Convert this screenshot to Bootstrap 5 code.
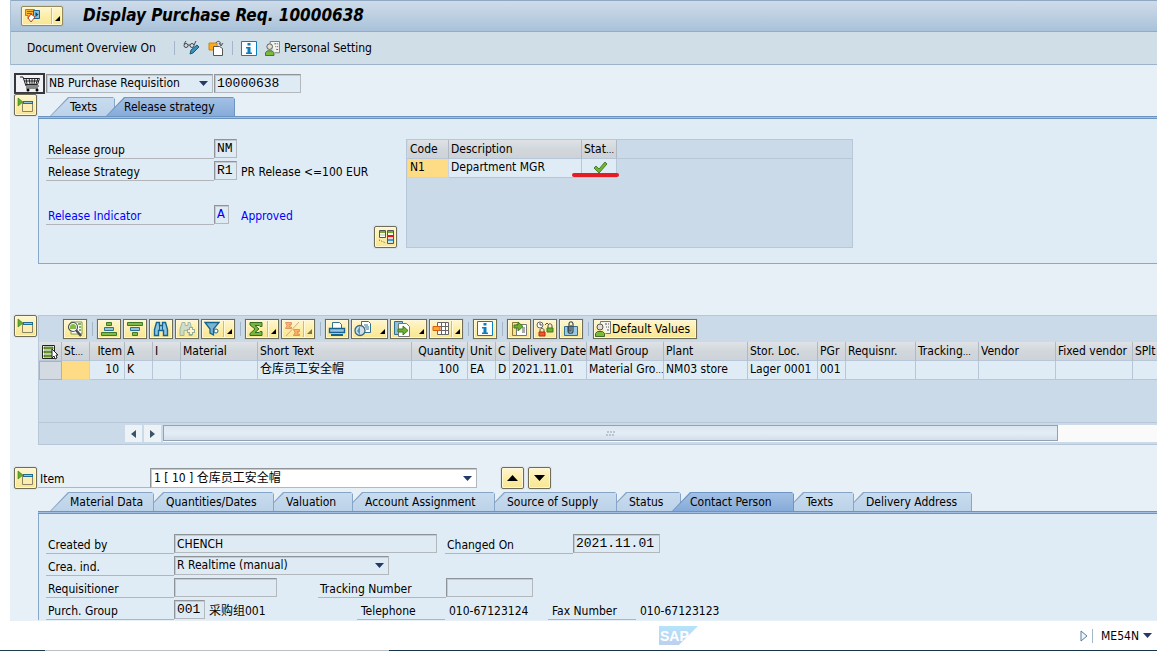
<!DOCTYPE html>
<html lang="en">
<head>
<meta charset="utf-8">
<meta name="viewport" content="width=device-width, initial-scale=1">
<title>Display Purchase Req. 10000638</title>
<link href="https://cdn.jsdelivr.net/npm/bootstrap@5.3.0/dist/css/bootstrap.min.css" rel="stylesheet">
<style>
:root { --ui: "DejaVu Sans Condensed", "Noto Sans CJK SC", sans-serif; --fixed: "Liberation Mono", "Noto Sans CJK SC", monospace; }
body { font: 12px/18px var(--ui); color: #000; background: #fff; }
button, input, select { font: inherit; color: inherit; }
svg { display: block; flex: none; }
.shell { min-height: 100vh; }
.work { margin-left: 10px; background: #e8f0f7; overflow: hidden; }
.frame-l { border-left: 1px solid #a9bed3; }
.titlebar { height: 32px; padding: 0 10px; border-top: 1px solid #8fa9c4; border-bottom: 1px solid #93abc5; background: linear-gradient(#cfdce9, #bccfe1 50%, #a9c2da); }
.titlebar h1 { font: italic bold 17px/26px var(--ui); margin: 0 0 3px 20px; }
.appbar { height: 33px; padding-left: 16px; background: #d0dee8; border-bottom: 1px solid #9cb3cb; }
.appbar .after-text { margin-left: 18px; }
.plain-btn { background: none; border: 0; padding: 0; display: flex; align-items: center; }
.vline { width: 1px; height: 14px; background: #a3b5c9; flex: none; }
.ybtn { display: flex; align-items: center; justify-content: center; padding: 0; border: 1px solid #6f6c58; border-radius: 2px; background: linear-gradient(#fdf6d4, #fdeea8 50%, #f8e694); box-shadow: inset 0 0 0 1px #fff8d8, 0 0 0 1px #9a978022; flex: none; }
.ybtn-lg { width: 23px; height: 22px; }
.ybtn-title { width: 42px; height: 20px; border-color: #948a5a; --cut: 29px; }
.tool { width: 24px; height: 20px; border-radius: 0; }
.tool-split { width: 34px; --cut: 21px; }
.tool-menu { width: 37px; }
.tool-split, .tool-menu, .ybtn-title { justify-content: space-between; padding: 0 2px; }
.tool-split, .ybtn-title { background: linear-gradient(90deg, transparent var(--cut), #cdbd78 0 calc(var(--cut) + 1px), #fffbe2 0 calc(var(--cut) + 2px), transparent 0), linear-gradient(#fdf6d4, #fdeea8 50%, #f8e694); }
.tool-text { width: 104px; justify-content: flex-start; padding-left: 1px; gap: 1px; white-space: nowrap; }
.off > svg:first-child { opacity: .5; }
.rail { width: 28px; padding-left: 4px; flex: none; }
.dots { font-size: 9px; line-height: 0; }
.fld { height: 19px; padding: 0 2px; border: 1px solid #b3b8bd; border-top-color: #8f9499; border-left-color: #8f9499; box-shadow: inset 1px 1px 0 #c5cbd0; border-radius: 0; background-color: #dfebf4; line-height: 15px; outline: 0; flex: none; }
.fld-fixed { font: 13px/16px var(--fixed); }
.drop { appearance: none; background: #dfebf4 url("data:image/svg+xml,%3Csvg xmlns='http://www.w3.org/2000/svg' width='9' height='5'%3E%3Cpath d='M0 0h9L4.500 5z' fill='%23243a66'/%3E%3C/svg%3E") no-repeat right 4px center; }
.drop-open { background-color: #fff; height: 20px; padding-left: 3px; }
.lbl { height: 20px; line-height: 22px; padding-left: 2px; border-bottom: 1px solid #b2b6ba; flex: none; white-space: nowrap; }
.frow { display: flex; height: 20px; margin-bottom: 2px; white-space: nowrap; }
.frow > span { line-height: 22px; }
.w-rel { width: 168px; } .w-std { width: 128px; } .w-tel { width: 88px; }
.w-f1 { width: 15px; } .w-f2 { width: 23px; } .w-f3 { width: 31px; } .w-f10 { width: 87px; } .w-f12 { width: 103px; } .w-f30 { width: 263px; } .w-sel { width: 215px; } .w-type { width: 167px; } .w-item { width: 327px; } .w-itemlbl { width: 112px; }
.relform { width: 328px; }
.docline { padding: 8px 0 0 4px; gap: 1px; }
.tabbox { padding-top: 3px; min-width: 0; }
.items { padding-top: 51px; }
.itemline { padding-top: 22px; }
.far { margin-left: 41px; }
.blue { color: #00f; }
.tabs { height: 19px; padding-left: 12px; }
.tab-i { position: relative; z-index: 0; border: 0; padding: 0 0 0 21px; height: 19px; margin-left: -9px; text-align: left; white-space: nowrap; line-height: 20px; background: #87a5c6; clip-path: polygon(18px 0, calc(100% - 2px) 0, 100% 2px, 100% 100%, 0 100%); flex: none; }
.tab-i::before { content: ""; position: absolute; inset: 1px 1px 0 1px; z-index: -1; background: linear-gradient(#c8dcef, #bcd2e8); clip-path: polygon(18px 0, 100% 0, 100% 100%, 0 100%); }
.tab-i:first-child { margin-left: 0; padding-left: 20px; }
.tab-i.active { z-index: 20; padding-left: 18px; background: #6d96c5; }
.tab-i.active::before { background: linear-gradient(#a3c0e4, #86abd9); }
.t1 { width: 104px; z-index: 9; } .t2 { width: 129px; z-index: 8; } .t3 { width: 88px; z-index: 7; } .t4 { width: 151px; z-index: 6; } .t5 { width: 131px; z-index: 5; } .t6 { width: 73px; z-index: 4; } .t7 { width: 122px; } .t8 { width: 69px; z-index: 2; } .t9 { width: 127px; z-index: 1; }
.ta { width: 65px; z-index: 2; } .tb { width: 129px; }
.pane { border-left: 1px solid #88a9cc; background: #dfecf5; padding: 0 0 0 7px; }
.pane::before { content: ""; display: block; height: 3px; margin: 0 0 20px -8px; background: #a2bfe2; border: solid #6c94c0; border-width: 1px 0 1px 0; }
.pane-rel { height: 148px; border-bottom: 1px solid #88a9cc; }
.pane-items { border: 1px solid #b8c7d7; border-right: 0; background: #cbdae9; overflow: hidden; }
.gridbox { width: 447px; height: 109px; margin-left: 9px; padding: 0 0 0 1px; border: 1px solid #b8c7d7; background: linear-gradient(transparent 18px, #b8c7d7 18px 19px, transparent 19px) #cbdae9; }
.tbl { table-layout: fixed; border-collapse: separate; border-spacing: 0; line-height: 17px; }
.tbl th { height: 19px; padding: 1px 0 0 2px; font-weight: normal; overflow: hidden; white-space: nowrap; background: linear-gradient(#dfe3e7, #d2d7dc 50%, #cdd3d9); border-right: 1px solid #b0b8c2; border-bottom: 1px solid #b8c7d7; }
.tbl td { height: 19px; padding: 0 0 1px 2px; overflow: hidden; white-space: nowrap; background: #dfecf5; border-right: 1px solid #b8c7d7; border-bottom: 1px solid #b8c7d7; }
.tbl td.key { background: #fddc85; border-color: #c8d6e4; }
.tbl .num { text-align: right; padding-right: 5px; }
.tbl td.qty { padding-right: 8px; }
.tbl th.num { padding-right: 2px; }
.tbl td.handle { background: #d3dae2; border: 1px solid #a9b2bd; }
.tbl-rel { width: 209px; }
.tbl-items { width: 1121px; }
.under { position: relative; overflow: visible !important; }
.under::after { content: ""; position: absolute; left: -10px; right: -3px; bottom: 0; height: 4px; border-radius: 2px; background: #e51c23; }
.itembar { height: 26px; padding: 0 0 1px 24px; gap: 2px; }
.itembar .vline { margin: 0 2px 0 3px; }
.scroller { height: 22px; margin-top: 42px; border-top: 1px solid #b8c7d7; padding: 2px 0 2px 86px; gap: 1px; }
.sbtn { width: 17px; height: 17px; border: 0; padding: 0; background: #edf2f7; display: flex; align-items: center; justify-content: center; margin-right: 1px; flex: none; }
.track { height: 17px; background: #fafafa; }
.thumb { width: 90%; height: 16px; border: 1px solid #94a1b0; background: linear-gradient(#dbe6ef, #e3edf5 50%, #d2e0eb); display: flex; align-items: center; justify-content: center; }
.statusbar { height: 29px; position: relative; padding-right: 5px; }
.saplogo { position: absolute; left: 57%; top: 5px; }
.edge { height: 1px; background: linear-gradient(90deg, #1d3d4d 45px, #b9bfc3 45px, #b9bfc3 389px, #17344a 389px); }
.cart { width: 31px; height: 21px; border: 2px solid #38383c; background: #f0f2f5; }
</style>
</head>
<body>
<svg width="0" height="0" class="position-absolute" aria-hidden="true">
  <symbol id="expand" viewBox="0 0 17 16"><path d="M5.500 5.500h10v9h-10z" fill="#fdeeb0" stroke="#8c8467"/><path d="M6 4h10v3H6z" fill="#1f6f95"/><path d="M7 5.500h8" stroke="#8fc6e0"/><path d="M1 1l5 4-5 4z" fill="#5fae2b" stroke="#3f7a1d" stroke-width=".6"/></symbol>
  <symbol id="info" viewBox="0 0 16 15"><path d="M.5.500h15v14H.500z" fill="#fff" stroke="#0b7fbf"/><path d="M6.500 2h3v2.500h-3zM5 6h4.500v5.500H11V13H5v-1.500h1.500v-4H5z" fill="#0b7fbf"/></symbol>
  <symbol id="person" viewBox="0 0 16 16"><path d="M5.500.500h10v12h-5M5.500.500v2" fill="#f3f3f0" stroke="#777"/><path d="M10 3h2m1 0h1m-3 3h1m1 0h1m-2 3h2" stroke="#555"/><circle cx="5" cy="6" r="3" fill="#e6ded2" stroke="#555"/><path d="M.5 15.500v-3l2-2h5l2 2v3z" fill="#7ab93a" stroke="#426b25"/></symbol>
  <symbol id="corner" viewBox="0 0 5 5"><path d="M5 0v5H0z" fill="#000"/></symbol>
</svg>
<div class="shell d-flex flex-column">
<main class="work flex-grow-1">
  <header class="frame-l">
    <div class="titlebar d-flex align-items-center">
      <button class="ybtn ybtn-title" aria-label="Services for object">
        <svg width="20" height="16" viewBox="0 0 20 16"><path d="M1.500 1.500h9v6H6l-2 3v-3H1.500z" fill="#fbb52c" stroke="#dd6a1b"/><path d="M3 3.500h6M3 5.500h5" stroke="#c9500c"/><path d="M9.500 2.500h6v8h-6z" fill="#86c1df" stroke="#1c6791"/><path d="M11.500 4l3 2.500-3 2.500z" fill="#124b70"/><path d="M7 6l4 3-4 5-3-4z" fill="#fff" stroke="#b8452a"/></svg>
        <svg class="align-self-end mb-1" width="5" height="5"><use href="#corner"/></svg>
      </button>
      <h1>Display Purchase Req. 10000638</h1>
    </div>
    <div class="appbar d-flex align-items-center">
      <button class="plain-btn">Document Overview On</button>
      <span class="vline after-text me-2"></span>
      <button class="plain-btn" aria-label="Display / Change"><svg width="17" height="16" viewBox="0 0 17 16"><g fill="none" stroke="#44494d"><circle cx="3" cy="5.500" r="2"/><circle cx="9" cy="5.500" r="2"/><path d="M1 4l2-3M7 5h-2M11 5l2-4"/></g><path d="M7 14l1-4 6-5 2 2-6 6z" fill="#3990bd" stroke="#1c5878"/></svg></button>
      <button class="plain-btn ms-2" aria-label="Other document"><svg width="16" height="16" viewBox="0 0 16 16"><path d="M1 3h8v7H1z" fill="#fbaa19" stroke="#d7820c"/><path d="M5.500 6.500h6l3 2v7h-9z" fill="#fff" stroke="#555"/><path d="M8 3c1-3 5-2 5 2M11 3l2 3 2-3" fill="none" stroke="#555"/></svg></button>
      <span class="vline ms-2 me-2"></span>
      <button class="plain-btn" aria-label="Information"><svg width="16" height="15"><use href="#info"/></svg></button>
      <button class="plain-btn ms-2"><svg class="me-1" width="15" height="15"><use href="#person"/></svg>Personal Setting</button>
    </div>
  </header>

  <section>
    <div class="d-flex docline align-items-center">
      <svg class="cart" viewBox="0 0 27 17"><path d="M4 2h3l3 9h13M7 3.500h16.500l-2 6H9M10 3l1 6M13 3l1 6M16 3v6M19 3l-1 6M22 3l-2 6M8 6h15M10 13h12" fill="none" stroke="#222"/><circle cx="12" cy="15" r="1.500"/><circle cx="21" cy="15" r="1.500"/></svg>
      <select class="fld drop w-type" aria-label="Document type"><option>NB Purchase Requisition</option></select>
      <input class="fld fld-fixed w-f10" value="10000638" readonly aria-label="Document number">
    </div>
    <div class="d-flex">
      <div class="rail"><button class="ybtn ybtn-lg" aria-label="Expand header"><svg width="17" height="16"><use href="#expand"/></svg></button></div>
      <div class="flex-grow-1 tabbox">
        <nav class="tabs d-flex"><button class="tab-i ta">Texts</button><button class="tab-i tb active">Release strategy</button></nav>
        <div class="pane pane-rel">
          <div class="d-flex">
            <div class="relform">
              <div class="frow"><label class="lbl w-rel" for="rg">Release group</label><input id="rg" class="fld fld-fixed w-f2" value="NM" readonly></div>
              <div class="frow"><label class="lbl w-rel" for="rs">Release Strategy</label><input id="rs" class="fld fld-fixed w-f2" value="R1" readonly><span class="ms-1">PR Release &lt;=100 EUR</span></div>
              <div class="frow"></div>
              <div class="frow blue"><label class="lbl w-rel" for="ri">Release Indicator</label><input id="ri" class="fld fld-fixed w-f1" value="A" readonly><span class="ms-2 ps-1">Approved</span></div>
            </div>
            <button class="ybtn ybtn-lg align-self-end" aria-label="Release options"><svg width="16" height="16" viewBox="0 0 16 16"><path d="M1.500 1.500h6v7h-6zM9.500 1.500h6v13h-6z" fill="#fff" stroke="#555"/><path d="M2 2h5v2H2zM10 2h5v2h-5z" fill="#6fae35"/><path d="M2 6h5M10 9h5M10 13h5" stroke="#bbb"/><path d="M10 6h5v2h-5z" fill="#e11"/><path d="M10 10h5v2h-5z" fill="#439bd0"/><path d="M1 11l7 3" stroke="#555" stroke-dasharray="1 1.500"/></svg></button>
            <div class="gridbox">
              <table class="tbl tbl-rel">
                <colgroup><col style="width:41px"><col style="width:133px"><col style="width:35px"></colgroup>
                <tr><th>Code</th><th>Description</th><th>Stat<span class="dots">…</span></th></tr>
                <tr><td class="key">N1</td><td>Department MGR</td><td class="under"><svg class="mx-auto" width="16" height="13" viewBox="0 0 16 13"><path d="M2 7l2-2 3 3 6-7 2 2-8 9z" fill="#72b32f" stroke="#47802a"/></svg></td></tr>
              </table>
            </div>
          </div>
        </div>
      </div>
    </div>
  </section>

  <section class="d-flex items">
    <div class="rail"><button class="ybtn ybtn-lg" aria-label="Expand items"><svg width="17" height="16"><use href="#expand"/></svg></button></div>
    <div class="pane-items flex-grow-1">
      <div class="itembar d-flex align-items-center">
        <button class="ybtn tool" aria-label="Details"><svg width="16" height="16" viewBox="0 0 16 16"><path d="M4 1h11v12H4z" fill="#fff" stroke="#7a9a4a"/><path d="M11 3h3M12 6h2M12 9h2" stroke="#5d9a2c" stroke-width="1.500"/><circle cx="6" cy="6" r="4.500" fill="#fff" stroke="#4a4f52" stroke-width="1.200"/><path d="M3 6a3 3 0 0 1 6 0v2H3z" fill="#86bb45"/><path d="M9 9l5 6" stroke="#4a4f52" stroke-width="2.500"/></svg></button>
        <span class="vline"></span>
        <button class="ybtn tool" aria-label="Sort ascending"><svg width="18" height="16" viewBox="0 0 18 16"><path d="M6.500 1.500h5v3h-5zM1.500 11.500h15v3h-15z" fill="#7fbb45" stroke="#3f7a2c"/><path d="M4.500 6.500h9v3h-9z" fill="#8cc4de" stroke="#31708f"/></svg></button>
        <button class="ybtn tool" aria-label="Sort descending"><svg width="18" height="16" viewBox="0 0 18 16"><path d="M1.500 1.500h15v3h-15zM6.500 11.500h5v3h-5z" fill="#7fbb45" stroke="#3f7a2c"/><path d="M4.500 6.500h9v3h-9z" fill="#8cc4de" stroke="#31708f"/></svg></button>
        <button class="ybtn tool" aria-label="Find"><svg width="16" height="16" viewBox="0 0 16 16"><path d="M3.500 1.500H6.500v3h3v-3h3l2 7v6h-4v-5h-5v5h-4v-6z" fill="#8fc6e0" stroke="#176390" stroke-width="1.400"/><path d="M6.500 4v5M9.500 4v5" stroke="#176390"/></svg></button>
        <button class="ybtn tool off" aria-label="Find next"><svg width="16" height="16" viewBox="0 0 16 16"><path d="M3 1.500h3v3h3v-3h2l2 7v6h-3v-5H5v5H1v-6z" fill="#a5cbdd" stroke="#45829f"/><path d="M12 6v8M8 10h8" stroke="#31708f" stroke-width="4"/><path d="M12 7v6M9 10h6" stroke="#fff" stroke-width="2"/></svg></button>
        <button class="ybtn tool tool-split" aria-label="Filter"><svg width="16" height="16" viewBox="0 0 16 16"><path d="M1 1.500h14L9.500 8v6L6 12V8z" fill="#78b5d5" stroke="#176390" stroke-width="1.300"/><circle cx="12" cy="10" r="2" fill="#fff" stroke="#176390"/></svg><svg class="align-self-end mb-1" width="5" height="5"><use href="#corner"/></svg></button>
        <span class="vline"></span>
        <button class="ybtn tool tool-split" aria-label="Total"><svg width="16" height="16" viewBox="0 0 16 16"><path d="M2 1.500h12v4h-2l-1-1H7l4 3.500-4 3.500h4l1-1h2v4H2v-2L7 8 2 4z" fill="#76b53a" stroke="#376b27"/></svg><svg class="align-self-end mb-1" width="5" height="5"><use href="#corner"/></svg></button>
        <button class="ybtn tool tool-split off" aria-label="Subtotal"><svg width="17" height="16" viewBox="0 0 17 16"><path d="M1.500 1.500h6v2H5l1.500 1L5 6h2.500v1.500h-6L3 4.500zM9.500 8.500h6v2H13l1.500 1L13 13h2.500v1.500h-6l1.500-3z" fill="#f5762c" stroke="#c8410f"/><path d="M15 1L2 15" stroke="#a65"/></svg><svg class="align-self-end mb-1 opacity-50" width="5" height="5"><use href="#corner"/></svg></button>
        <span class="vline"></span>
        <button class="ybtn tool" aria-label="Print"><svg width="18" height="16" viewBox="0 0 18 16"><path d="M4.500 1.500h7l2 2v4h-9z" fill="#fff" stroke="#31708f"/><path d="M1.500 7.500h15v4h-15z" fill="#9ac5dd" stroke="#176390" stroke-width="1.400"/><path d="M3 14h12" stroke="#176390" stroke-width="2"/></svg></button>
        <button class="ybtn tool tool-menu" aria-label="Views"><svg width="18" height="16" viewBox="0 0 18 16"><path d="M7.500.500h7l2 2v9h-9z" fill="#fff" stroke="#31708f"/><path d="M10 4h4M11 6h4M12 8h3" stroke="#31708f"/><circle cx="6" cy="9.500" r="5" fill="#cfe1ea" stroke="#40657a" stroke-width="1.300"/><path d="M6 5v9l-3-4z" fill="#4a98c1"/></svg><svg class="align-self-end mb-1" width="5" height="5"><use href="#corner"/></svg></button>
        <button class="ybtn tool tool-menu" aria-label="Export"><svg width="18" height="16" viewBox="0 0 18 16"><path d="M1.500.500h8v13h-8z" fill="#8fc0da" stroke="#31708f"/><path d="M5.500 2.500h8l3 3v10h-11z" fill="#fff" stroke="#777"/><path d="M5 8h5V5l5 4.500-5 4.500v-3H5z" fill="#6fb02f" stroke="#3f7a1d"/></svg><svg class="align-self-end mb-1" width="5" height="5"><use href="#corner"/></svg></button>
        <button class="ybtn tool tool-split" aria-label="Layout"><svg width="18" height="16" viewBox="0 0 18 16"><path d="M5.500 1.500h11v12h-11zM5 5.500h12M5 9.500h12M9.500 1v13M13.500 1v13" fill="#fff" stroke="#666"/><path d="M1 5.500h7v4H1z" fill="#fbaa2c" stroke="#df5b13"/></svg><svg class="align-self-end mb-1" width="5" height="5"><use href="#corner"/></svg></button>
        <span class="vline"></span>
        <button class="ybtn tool" aria-label="Information"><svg width="16" height="15"><use href="#info"/></svg></button>
        <span class="vline"></span>
        <button class="ybtn tool" aria-label="Copy item"><svg width="17" height="16" viewBox="0 0 17 16"><path d="M1.500 1.500h6v13h-6z" fill="#fde08b" stroke="#8b7a35"/><path d="M5.500 3.500h10v11h-10z" fill="#fff" stroke="#777"/><path d="M11 7h3M11 9h3M11 11h3" stroke="#555"/><path d="M3 4h4V1l5 4.500L7 10V7H3z" fill="#6fb02f" stroke="#3f7a1d"/></svg></button>
        <button class="ybtn tool" aria-label="Lock"><svg width="18" height="16" viewBox="0 0 18 16"><circle cx="4" cy="4" r="3" fill="#fff" stroke="#666"/><path d="M4 2v2h2M9 4l2-2 2 2" fill="none" stroke="#555"/><path d="M12 7V5c0-3 4-3 4 0v2" fill="none" stroke="#555"/><path d="M11 7h6v4h-6z" fill="#6fb02f" stroke="#3f7a1d"/><path d="M4 11V9c0-2 4-2 4 0v2" fill="none" stroke="#555"/><path d="M3 11h6v4H3z" fill="#ee5a2a" stroke="#b52b14"/></svg></button>
        <button class="ybtn tool" aria-label="Attachments"><svg width="16" height="16" viewBox="0 0 16 16"><path d="M1.500 5.500h13v9h-13z" fill="#9cc9e2" stroke="#31708f"/><path d="M5 5v5c0 3 5 3 5 0V3c0-3-4-3-4 0v7h2V4" fill="none" stroke="#3b4a54" stroke-width="1.200"/></svg></button>
        <span class="vline"></span>
        <button class="ybtn tool tool-text"><svg width="16" height="16"><use href="#person"/></svg>Default Values</button>
      </div>
      <table class="tbl tbl-items">
        <colgroup><col style="width:23px"><col style="width:28px"><col style="width:35px"><col style="width:28px"><col style="width:28px"><col style="width:77px"><col style="width:154px"><col style="width:56px"><col style="width:28px"><col style="width:14px"><col style="width:77px"><col style="width:77px"><col style="width:84px"><col style="width:70px"><col style="width:28px"><col style="width:70px"><col style="width:63px"><col style="width:77px"><col style="width:77px"><col style="width:27px"></colgroup>
        <tr><th><svg width="18" height="16" viewBox="0 0 18 16"><path d="M1.500 1.500h12v13h-12z" fill="#fff" stroke="#222"/><path d="M3 3h9v2H3zM3 7h9v2H3zM3 11h9v2H3z" fill="#7bb02c" stroke="#356019" stroke-width=".7"/><path d="M11 5v9l2-2 1 3 2-1-1-3h2z" fill="#fff" stroke="#222"/></svg></th><th>St<span class="dots">…</span></th><th class="num">Item</th><th>A</th><th>I</th><th>Material</th><th>Short Text</th><th class="num">Quantity</th><th>Unit</th><th>C</th><th>Delivery Date</th><th>Matl Group</th><th>Plant</th><th>Stor. Loc.</th><th>PGr</th><th>Requisnr.</th><th>Tracking<span class="dots">…</span></th><th>Vendor</th><th>Fixed vendor</th><th>SPlt</th></tr>
        <tr><td class="handle"></td><td class="key"></td><td class="num">10</td><td>K</td><td></td><td></td><td>仓库员工安全帽</td><td class="num qty">100</td><td>EA</td><td>D</td><td>2021.11.01</td><td>Material Gro<span class="dots">…</span></td><td>NM03 store</td><td>Lager 0001</td><td>001</td><td></td><td></td><td></td><td></td><td></td></tr>
      </table>
      <div class="scroller d-flex">
        <button class="sbtn" aria-label="Scroll left"><svg width="5" height="8"><path d="M5 0v8L0 4z" fill="#3b5368"/></svg></button>
        <button class="sbtn" aria-label="Scroll right"><svg width="5" height="8"><path d="M0 0v8l5-4z" fill="#3b5368"/></svg></button>
        <div class="track flex-grow-1"><div class="thumb"><svg width="9" height="5"><path d="M1 1h2m1 0h2m1 0h2M0 4h2m1 0h2m1 0h2" stroke="#94a1b0"/></svg></div></div>
      </div>
    </div>
  </section>

  <section>
    <div class="d-flex align-items-center itemline">
      <div class="rail"><button class="ybtn ybtn-lg" aria-label="Expand item detail"><svg width="17" height="16"><use href="#expand"/></svg></button></div>
      <label class="lbl w-itemlbl" for="item">Item</label>
      <select id="item" class="fld drop drop-open w-item"><option>1 [ 10 ] 仓库员工安全帽</option></select>
      <button class="ybtn ybtn-lg ms-4" aria-label="Previous item"><svg width="11" height="6"><path d="M0 6h11L5.500 0z"/></svg></button>
      <button class="ybtn ybtn-lg ms-1" aria-label="Next item"><svg width="11" height="6"><path d="M0 0h11L5.500 6z"/></svg></button>
    </div>
    <div class="d-flex">
      <div class="rail"></div>
      <div class="flex-grow-1 tabbox">
        <nav class="tabs d-flex"><button class="tab-i t1">Material Data</button><button class="tab-i t2">Quantities/Dates</button><button class="tab-i t3">Valuation</button><button class="tab-i t4">Account Assignment</button><button class="tab-i t5">Source of Supply</button><button class="tab-i t6">Status</button><button class="tab-i t7 active">Contact Person</button><button class="tab-i t8">Texts</button><button class="tab-i t9">Delivery Address</button></nav>
        <div class="pane">
          <div class="frow"><label class="lbl w-std" for="cb">Created by</label><input id="cb" class="fld w-f30" value="CHENCH" readonly><label class="lbl w-std ms-2" for="co">Changed On</label><input id="co" class="fld fld-fixed w-f10" value="2021.11.01" readonly></div>
          <div class="frow"><label class="lbl w-std" for="ci">Crea. ind.</label><select id="ci" class="fld drop w-sel"><option>R Realtime (manual)</option></select></div>
          <div class="frow"><label class="lbl w-std" for="rq">Requisitioner</label><input id="rq" class="fld w-f12" readonly><label class="lbl w-std far" for="tn">Tracking Number</label><input id="tn" class="fld w-f10" readonly></div>
          <div class="frow mb-0"><label class="lbl w-std" for="pg">Purch. Group</label><input id="pg" class="fld fld-fixed w-f3" value="001" readonly><span class="ps-1 w-std me-4">采购组001</span><span class="lbl w-tel ps-1">Telephone</span><span class="ps-1 w-f12">010-67123124</span><span class="lbl w-tel ps-1">Fax Number</span><span class="ps-1">010-67123123</span></div>
        </div>
      </div>
    </div>
  </section>
</main>
<footer>
  <div class="statusbar d-flex align-items-center justify-content-end">
    <svg class="saplogo" width="39" height="19" viewBox="0 0 39 19"><defs><linearGradient id="sg" x2="0" y2="1"><stop stop-color="#b4e4fa"/><stop offset="1" stop-color="#bdd0ee"/></linearGradient></defs><path d="M0 0h39L20 19H0z" fill="url(#sg)"/><text x="1" y="15" font-family="Liberation Sans" font-weight="bold" font-size="14" fill="#fff">SAP</text></svg>
    <button class="plain-btn" aria-label="Show status fields"><svg width="8" height="12" viewBox="0 0 8 12"><path d="M1 1l6 5-6 5z" fill="#eef4fa" stroke="#5b7da3"/></svg></button>
    <span class="vline ms-1 me-2"></span>
    <button class="plain-btn">ME54N<svg class="ms-1" width="9" height="5"><path d="M0 0h9L4.500 5z" fill="#243a66"/></svg></button>
  </div>
  <div class="edge"></div>
</footer>
</div>
<script src="https://cdn.jsdelivr.net/npm/bootstrap@5.3.0/dist/js/bootstrap.bundle.min.js"></script>
</body>
</html>
